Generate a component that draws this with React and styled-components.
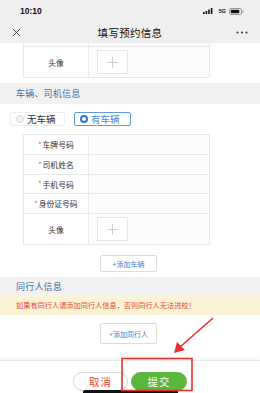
import styled, { createGlobalStyle } from "styled-components";

const GlobalStyle = createGlobalStyle`
  html, body {
    margin: 0;
    padding: 0;
    background: #ffffff;
  }
  body {
    font-family: "Noto Sans CJK SC", "Noto Sans", sans-serif;
    color: #333333;
  }
`;

const Page = styled.div`
  position: relative;
  width: 260px;
  height: 393px;
  display: flex;
  flex-direction: column;
  overflow: hidden;
  background: #ffffff;
`;

const StatusBar = styled.div`
  height: 22px;
  background: #efefef;
  display: flex;
  align-items: center;
  padding: 0 16px 0 20px;
  font-family: "Liberation Sans", "Noto Sans", sans-serif;
`;

const Time = styled.div`
  font-size: 8.5px;
  font-weight: 700;
  color: #111111;
`;

const StatusIcons = styled.div`
  margin-left: auto;
  display: flex;
  align-items: center;
  gap: 3px;
  font-size: 5.5px;
  color: #111111;
  font-weight: 700;
`;

const NavBar = styled.div`
  height: 21px;
  background: #efefef;
  display: flex;
  align-items: center;
  padding: 0 12px 0 12px;
`;

const NavSide = styled.div`
  width: 24px;
  display: flex;
  justify-content: ${(p) => (p.$right ? "flex-end" : "flex-start")};
  align-items: center;
  color: #222222;
`;

const NavTitle = styled.div`
  flex: 1;
  text-align: center;
  font-size: 10.5px;
  color: #111111;
  letter-spacing: 0.3px;
`;

const Content = styled.div`
  flex: 1;
  display: flex;
  flex-direction: column;
  overflow: hidden;
`;

const Table = styled.div`
  margin-left: 23px;
  width: 187px;
  border-left: 1px solid #e9e9e9;
  border-right: 1px solid #e9e9e9;
  border-bottom: 1px solid #e9e9e9;
  border-top: ${(p) => (p.$open ? "none" : "1px solid #e9e9e9")};
  box-sizing: border-box;
`;

const Row = styled.div`
  display: grid;
  grid-template-columns: 65px 1fr;
  box-sizing: border-box;
  height: ${(p) => p.$h}px;
  & + & {
    border-top: 1px solid #e9e9e9;
  }
`;

const Label = styled.div`
  border-right: 1px solid #e9e9e9;
  display: flex;
  align-items: center;
  justify-content: center;
  font-size: 7.8px;
  color: #333333;
`;

const Star = styled.span`
  color: #e94b3c;
  margin-right: 1px;
  font-size: 7px;
  position: relative;
  top: -1px;
`;

const Cell = styled.div`
  background: #fcfcfc;
  display: flex;
  align-items: center;
  padding-left: 8px;
`;

const PlusBox = styled.div`
  width: 31px;
  height: 24px;
  border: 1px solid #e6e6e6;
  box-sizing: border-box;
  display: flex;
  align-items: center;
  justify-content: center;
  background: #ffffff;
`;

const SectionHeader = styled.div`
  margin-top: ${(p) => p.$mt}px;
  height: ${(p) => p.$h}px;
  background: #f2f2f2;
  display: flex;
  align-items: center;
  padding-left: 16px;
  font-size: 9px;
  color: #3d6fae;
  letter-spacing: 0.2px;
`;

const RadioRow = styled.div`
  display: flex;
  gap: 9px;
  margin: 8px 0 8px 10px;
`;

const RadioButton = styled.div`
  width: ${(p) => p.$w}px;
  height: 14px;
  box-sizing: border-box;
  border: 1px solid ${(p) => (p.$active ? "#5b9be8" : "#eeeeee")};
  border-radius: 2px;
  display: flex;
  align-items: center;
  padding-left: 5px;
  gap: 3px;
  font-size: 9.5px;
  color: ${(p) => (p.$active ? "#4b87d8" : "#333333")};
`;

const RadioDot = styled.span`
  width: 8px;
  height: 8px;
  box-sizing: border-box;
  border-radius: 50%;
  border: ${(p) => (p.$active ? "2px solid #2f74d6" : "1px solid #d8d8d8")};
  background: ${(p) => (p.$active ? "#ffffff" : "#f2f2f2")};
`;

const AddButton = styled.div`
  margin: ${(p) => p.$mt}px 0 0 100px;
  width: 57px;
  height: ${(p) => p.$h}px;
  box-sizing: border-box;
  border: 1px solid #dddddd;
  border-radius: 2px;
  display: flex;
  align-items: center;
  justify-content: center;
  font-size: 7px;
  color: #4a7fcc;
`;

const Notice = styled.div`
  height: 20px;
  background: #fcf2d4;
  display: flex;
  align-items: center;
  padding-left: 16px;
  font-size: 7.2px;
  color: #e8473b;
  white-space: nowrap;
`;

const Footer = styled.div`
  height: 33px;
  border-top: 1px solid #e8e8e8;
  box-shadow: 0 -2px 4px rgba(0, 0, 0, 0.05);
  display: flex;
  justify-content: center;
  padding: 11px 0 0 0;
  box-sizing: border-box;
  gap: 3px;
  position: relative;
`;

const FooterButton = styled.div`
  width: ${(p) => p.$w}px;
  height: 19px;
  border-radius: 10px;
  box-sizing: border-box;
  border: 1px solid ${(p) => (p.$primary ? "#5bb63d" : "#d6d6d6")};
  background: ${(p) => (p.$primary ? "#5bb63d" : "#ffffff")};
  color: ${(p) => (p.$primary ? "#ffffff" : "#e5453a")};
  display: flex;
  align-items: center;
  justify-content: center;
  font-size: 10.5px;
  letter-spacing: 1px;
`;

const HomeBar = styled.div`
  position: absolute;
  left: 83px;
  bottom: 0;
  width: 95px;
  height: 3px;
  border-radius: 2px 2px 0 0;
  background: #111111;
`;

const Annotation = styled.svg`
  position: absolute;
  left: 0;
  top: 0;
  pointer-events: none;
`;

function SignalIcon() {
  return (
    <svg width="13" height="6" viewBox="0 0 13 6">
      <rect x="0" y="4" width="1.6" height="2" fill="#111" />
      <rect x="2.6" y="3" width="1.6" height="3" fill="#111" />
      <rect x="5.2" y="1.5" width="1.6" height="4.5" fill="#111" />
      <rect x="7.8" y="0" width="1.6" height="6" fill="#111" />
    </svg>
  );
}

function BatteryIcon() {
  return (
    <svg width="15" height="7" viewBox="0 0 15 7">
      <rect x="0.5" y="0.5" width="12" height="6" rx="1.5" fill="none" stroke="#999" />
      <rect x="1.8" y="1.8" width="8.5" height="3.4" rx="0.6" fill="#111" />
      <rect x="13.3" y="2.3" width="1.2" height="2.4" rx="0.5" fill="#999" />
    </svg>
  );
}

function CloseIcon() {
  return (
    <svg width="9" height="9" viewBox="0 0 9 9">
      <path d="M1 1 L8 8 M8 1 L1 8" stroke="#333" strokeWidth="0.9" fill="none" />
    </svg>
  );
}

function MoreIcon() {
  return (
    <svg width="12" height="3" viewBox="0 0 12 3">
      <circle cx="1.5" cy="1.5" r="1" fill="#333" />
      <circle cx="6" cy="1.5" r="1" fill="#333" />
      <circle cx="10.5" cy="1.5" r="1" fill="#333" />
    </svg>
  );
}

function PlusIcon() {
  return (
    <svg width="11" height="11" viewBox="0 0 11 11">
      <path d="M5.5 0 V11 M0 5.5 H11" stroke="#c9c9c9" strokeWidth="0.9" fill="none" />
    </svg>
  );
}

const vehicleFields = [
  { name: "车牌号码", h: 19 },
  { name: "司机姓名", h: 20 },
  { name: "手机号码", h: 19 },
  { name: "身份证号码", h: 20 },
];

export default function App() {
  return (
    <Page>
      <GlobalStyle />
      <StatusBar>
        <Time>10:10</Time>
        <StatusIcons>
          <SignalIcon />
          <span>5G</span>
          <BatteryIcon />
        </StatusIcons>
      </StatusBar>
      <NavBar>
        <NavSide>
          <CloseIcon />
        </NavSide>
        <NavTitle>填写预约信息</NavTitle>
        <NavSide $right>
          <MoreIcon />
        </NavSide>
      </NavBar>

      <Content>
        <Table $open>
          <Row $h={3}>
            <Label />
            <Cell />
          </Row>
          <Row $h={31}>
            <Label>头像</Label>
            <Cell>
              <PlusBox>
                <PlusIcon />
              </PlusBox>
            </Cell>
          </Row>
        </Table>

        <SectionHeader $mt={5} $h={21}>车辆、司机信息</SectionHeader>

        <RadioRow>
          <RadioButton $w={55}>
            <RadioDot />
            无车辆
          </RadioButton>
          <RadioButton $w={57} $active>
            <RadioDot $active />
            有车辆
          </RadioButton>
        </RadioRow>

        <Table>
          {vehicleFields.map((field) => (
            <Row key={field.name} $h={field.h}>
              <Label>
                <Star>*</Star>
                {field.name}
              </Label>
              <Cell />
            </Row>
          ))}
          <Row $h={31}>
            <Label>头像</Label>
            <Cell>
              <PlusBox>
                <PlusIcon />
              </PlusBox>
            </Cell>
          </Row>
        </Table>

        <AddButton $mt={10} $h={17}>+添加车辆</AddButton>

        <SectionHeader $mt={5} $h={18}>同行人信息</SectionHeader>
        <Notice>如果有同行人请添加同行人信息，否则同行人无法进校！</Notice>

        <AddButton $mt={8} $h={21}>+添加同行人</AddButton>
      </Content>

      <Footer>
        <FooterButton $w={55}>取消</FooterButton>
        <FooterButton $w={56} $primary>提交</FooterButton>
        <HomeBar />
      </Footer>

      <Annotation width="260" height="393" viewBox="0 0 260 393">
        <line x1="213" y1="318" x2="180" y2="347" stroke="#e8312a" strokeWidth="1.6" />
        <polygon points="174,353 177,342 185,350" fill="#e8312a" />
        <rect x="122" y="358.5" width="70" height="32" fill="none" stroke="#e8312a" strokeWidth="1.6" />
      </Annotation>
    </Page>
  );
}
